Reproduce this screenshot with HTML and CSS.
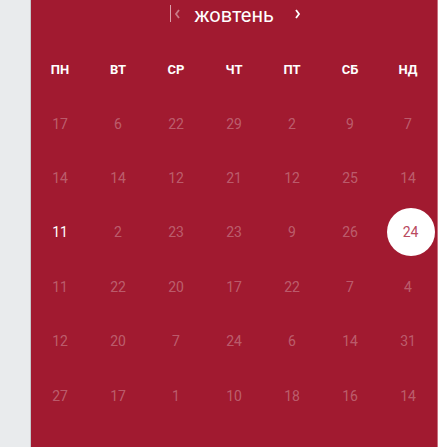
FILE: index.html
```html
<!DOCTYPE html>
<html lang="uk">
<head>
<meta charset="utf-8">
<link rel="stylesheet" href="styles.css">
</head>
<body>
<div class="page">
  <aside class="side"></aside>
  <main class="cal">
    <header class="head">
      <svg class="nav" width="23" height="30" viewBox="0 0 23 30">
        <line x1="1.5" y1="5" x2="1.5" y2="22" stroke="#d9a0aa" stroke-width="1"/>
        <polyline points="10,10 7,14 10,18" fill="none" stroke="#c97a88" stroke-width="1.8"/>
      </svg>
      <span class="title">жовтень</span>
      <svg class="nav" width="25" height="30" viewBox="0 0 25 30">
        <polyline points="20,10 23,14 20,18" fill="none" stroke="#ffffff" stroke-width="1.8"/>
      </svg>
    </header>
    <div class="grid">
      <div class="wd">ПН</div><div class="wd">ВТ</div><div class="wd">СР</div><div class="wd">ЧТ</div><div class="wd">ПТ</div><div class="wd">СБ</div><div class="wd">НД</div>

      <div class="d">17</div><div class="d">6</div><div class="d">22</div><div class="d">29</div><div class="d">2</div><div class="d">9</div><div class="d">7</div>
      <div class="d">14</div><div class="d">14</div><div class="d">12</div><div class="d">21</div><div class="d">12</div><div class="d">25</div><div class="d">14</div>
      <div class="d cur">11</div><div class="d">2</div><div class="d">23</div><div class="d">23</div><div class="d">9</div><div class="d">26</div><div class="d sel"><span>24</span></div>
      <div class="d">11</div><div class="d">22</div><div class="d">20</div><div class="d">17</div><div class="d">22</div><div class="d">7</div><div class="d">4</div>
      <div class="d">12</div><div class="d">20</div><div class="d">7</div><div class="d">24</div><div class="d">6</div><div class="d">14</div><div class="d">31</div>
      <div class="d">27</div><div class="d">17</div><div class="d">1</div><div class="d">10</div><div class="d">18</div><div class="d">16</div><div class="d">14</div>
    </div>
  </main>
</div>
</body>
</html>
```

FILE: styles.css
```css
html, body {
  margin: 0;
  padding: 0;
  height: 100%;
  overflow: hidden;
}
body {
  font-family: Roboto, "Liberation Sans", sans-serif;
}
.page {
  display: flex;
  height: 447px;
}
.side {
  width: 30px;
  background: #e9ebed;
  border-right: 1px solid #c6c8cb;
}
.cal {
  flex: 1;
  background: #a11a30;
  border-right: 1px solid #c9707f;
  display: flex;
  flex-direction: column;
}
.head {
  height: 30px;
  display: flex;
  justify-content: center;
  align-items: center;
  padding-left: 2px;
}
.nav {
  display: block;
}
.title {
  color: #ffffff;
  font-size: 20px;
  line-height: 30px;
  width: 84px;
  text-align: center;
}
.grid {
  margin-top: 12px;
  display: grid;
  grid-template-columns: repeat(7, 1fr);
  grid-auto-rows: 54.4px;
}
.wd {
  display: flex;
  align-items: center;
  justify-content: center;
  color: #ffffff;
  font-weight: bold;
  font-size: 13px;
}
.d {
  display: flex;
  align-items: center;
  justify-content: center;
  color: rgba(255, 255, 255, 0.3);
  font-size: 14px;
}
.d.cur {
  color: #ffffff;
}
.d.sel span {
  width: 48px;
  height: 48px;
  border-radius: 50%;
  background: #ffffff;
  color: #b94a5e;
  display: flex;
  align-items: center;
  justify-content: center;
  margin-left: 5px;
}
```
